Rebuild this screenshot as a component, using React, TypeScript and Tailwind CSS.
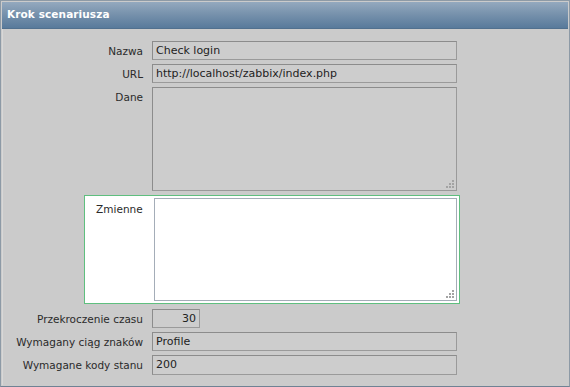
const Grip = () => (
  <svg
    className="absolute bottom-[2px] right-[2px]"
    width="9"
    height="9"
    viewBox="0 0 9 9"
  >
    {[
      [7, 1],
      [4, 4],
      [7, 4],
      [1, 7],
      [4, 7],
      [7, 7],
    ].map(([x, y], i) => (
      <rect key={i} x={x} y={y} width="2" height="2" fill="#a3a3a3" />
    ))}
  </svg>
);

interface RowProps {
  label: string;
  children: React.ReactNode;
  active?: boolean;
  className?: string;
}

const Row = ({ label, children, active, className = "" }: RowProps) => (
  <div
    className={`flex items-start border px-[2px] ${
      active ? "border-[#5fbf7f] bg-white py-[2px]" : "border-transparent py-[1px]"
    } ${className}`}
  >
    <div
      className={`w-[56px] mr-[9px] flex justify-end whitespace-nowrap text-[10.5px] text-[#2a2a2a] ${
        active ? "pt-[4px] mr-[7px] w-[58px] pr-[2px]" : "pt-[3px]"
      }`}
    >
      {label}
    </div>
    {children}
  </div>
);

const inputCls =
  "h-[19px] border border-[#9a9a9a] border-t-[#8c8c8c] border-l-[#8c8c8c] bg-[#cdcdcd] px-[3px] text-[11px] leading-[17px] text-[#222]";

export default function App() {
  return (
    <div
      className="w-[570px] h-[387px] bg-[#cbcbcb] border border-[#8d9aa6] border-b-[#6f8294] p-[1px] flex flex-col"
      style={{ fontFamily: '"DejaVu Sans", Verdana, sans-serif' }}
    >
      <div className="h-[27px] bg-gradient-to-b from-[#94a9be] via-[#7590ab] to-[#587a9b] border-b border-[#51708e] flex items-center px-[5px]">
        <span className="text-white font-bold text-[10.5px] tracking-[0.1px]">
          Krok scenariusza
        </span>
      </div>
      <div className="flex-1 border-l border-[#d8d8d8] pt-[10px] pl-[81px] flex flex-col">
        <div className="w-[376px] flex flex-col">
          <Row label="Nazwa">
            <div className={`${inputCls} w-[305px]`}>Check login</div>
          </Row>
          <Row label="URL">
            <div className={`${inputCls} w-[305px]`}>
              http://localhost/zabbix/index.php
            </div>
          </Row>
          <Row label="Dane">
            <div className="relative w-[305px] h-[104px] border border-[#9a9a9a] border-t-[#8c8c8c] border-l-[#8c8c8c] bg-[#cdcdcd]">
              <Grip />
            </div>
          </Row>
          <Row label="Zmienne" active className="mt-[2px]">
            <div className="relative w-[305px] h-[103px] border border-[#a4adb8] bg-white">
              <Grip />
            </div>
          </Row>
          <Row label="Przekroczenie czasu" className="mt-[3px]">
            <div className={`${inputCls} w-[48px] text-right`}>30</div>
          </Row>
          <Row label="Wymagany ciąg znaków">
            <div className={`${inputCls} w-[305px]`}>Profile</div>
          </Row>
          <Row label="Wymagane kody stanu">
            <div className={`${inputCls} w-[305px] h-[20px]`}>200</div>
          </Row>
        </div>
      </div>
    </div>
  );
}
